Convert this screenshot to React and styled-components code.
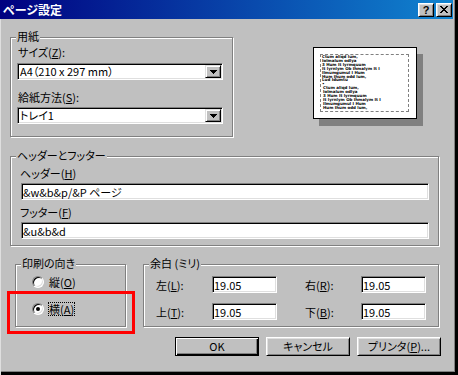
import React from 'react'
import styled, { createGlobalStyle, css } from 'styled-components'

const face = '#c0c0c0'

const GlobalStyle = createGlobalStyle`
  body {
    margin: 0;
    background: ${face};
    font-family: "MS UI Gothic", "Noto Sans CJK JP", sans-serif;
    font-size: 11px;
    font-feature-settings: "palt";
    color: #000;
  }
`

const raised = css`
  background: ${face};
  border: 1px solid;
  border-color: #fff #000 #000 #fff;
  box-shadow: inset 1px 1px 0 #dfdfdf, inset -1px -1px 0 #808080;
`

const sunken = css`
  background: #fff;
  border: 1px solid;
  border-color: #808080 #fff #fff #808080;
  box-shadow: inset 1px 1px 0 #000, inset -1px -1px 0 #dfdfdf;
`

const Window = styled.div`
  position: relative;
  width: 458px;
  height: 375px;
  box-sizing: border-box;
  padding-right: 5px;
  background: ${face};
  box-shadow: inset -3px -3px 0 #000, inset -4px -4px 0 #808080;
  display: flex;
  flex-direction: column;
  overflow: hidden;
`

const TitleBar = styled.div`
  height: 19px;
  display: flex;
  align-items: center;
  padding: 0 1px 0 3px;
  background: linear-gradient(to right, #000080, #1084d0);
  color: #fff;
  font-size: 12px;
  font-weight: bold;
`

const Title = styled.span`
  flex: 1;
  line-height: 14px;
`

const CaptionButton = styled.button`
  ${raised};
  box-sizing: border-box;
  width: 16px;
  height: 14px;
  padding: 0;
  margin-left: ${p => p.$gap || 0}px;
  display: flex;
  align-items: center;
  justify-content: center;
  font: bold 11px "Liberation Sans", sans-serif;
  color: #000;
`

const Body = styled.div`
  flex: 1;
  padding: 18px 0 0 10px;
  box-shadow: inset 1px 0 0 #dfdfdf;
  display: flex;
  flex-direction: column;
`

const TopRow = styled.div`
  display: flex;
  align-items: flex-start;
`

const Group = styled.div`
  position: relative;
  box-sizing: border-box;
  width: ${p => p.$w}px;
  height: ${p => (p.$h ? `${p.$h}px` : 'auto')};
  margin: ${p => p.$m || 0};
  padding: ${p => p.$pad || 0};
  border: 1px solid #808080;
  box-shadow: inset 1px 1px 0 #fff, 1px 1px 0 #fff;
  display: flex;
  flex-direction: column;
  align-items: flex-start;
`

const Legend = styled.span`
  position: absolute;
  top: -8px;
  left: 5px;
  padding: 0 1px;
  line-height: 13px;
  background: ${face};
`

const Label = styled.div`
  line-height: 14px;
  margin: ${p => p.$mt || 0}px 0 0 ${p => p.$ml || 0}px;
  white-space: nowrap;

  u {
    text-underline-offset: 1px;
  }
`

const Combo = styled.div`
  ${sunken};
  box-sizing: border-box;
  width: 206px;
  height: 17px;
  margin: ${p => p.$mt}px 0 0 6px;
  padding: 1px 1px 1px 2px;
  display: flex;
  align-items: center;
  line-height: 13px;
`

const ComboText = styled.span`
  flex: 1;
  white-space: nowrap;
`

const DropButton = styled.span`
  ${raised};
  box-sizing: border-box;
  width: 16px;
  height: 13px;
  border-color: #dfdfdf #000 #000 #dfdfdf;
  box-shadow: inset 1px 1px 0 #fff, inset -1px -1px 0 #808080;
  display: flex;
  align-items: center;
  justify-content: center;
`

const TextBox = styled.input`
  ${sunken};
  box-sizing: border-box;
  width: ${p => (p.$w ? `${p.$w}px` : '100%')};
  height: 17px;
  margin: ${p => p.$mt || 0}px 0 0 0;
  padding: 0 1px;
  font: inherit;
  line-height: 15px;
  color: #000;
  outline: none;
`

const PaperSheet = styled.div`
  box-sizing: border-box;
  width: 104px;
  height: 72px;
  margin: 10px 0 0 80px;
  padding: 6px 7px 6px 6px;
  background: #fff;
  border: 1px solid #000;
  box-shadow: 6px 7px 0 #808080;
`

const MarginBox = styled.div`
  box-sizing: border-box;
  height: 100%;
  border: 1px dashed #808080;
  padding: 0 1px;
  overflow: hidden;
  font: bold 4px/3.9px "DejaVu Sans", sans-serif;
  color: #000;
  white-space: nowrap;
`

const PreviewLine = styled.div`
  padding-left: ${p => (p.$indent ? 1 : 0)}px;
`

const BottomRow = styled.div`
  display: flex;
  align-items: flex-start;
  gap: 17px;
  margin: 18px 0 0 5px;
`

const RadioRow = styled.div`
  display: flex;
  align-items: center;
  height: 14px;
  margin: ${p => p.$mt}px 0 0 16px;
`

const RadioCircle = styled.span`
  position: relative;
  box-sizing: border-box;
  width: 12px;
  height: 12px;
  margin-right: 4px;
  border-radius: 50%;
  ${sunken};

  ${p => p.$checked && css`
    &::after {
      content: '';
      position: absolute;
      left: 3px;
      top: 3px;
      width: 4px;
      height: 4px;
      border-radius: 50%;
      background: #000;
    }
  `}
`

const RadioText = styled.span`
  line-height: 14px;
  padding: 0 1px;
  outline: ${p => (p.$focus ? '1px dotted #000' : 'none')};
  outline-offset: -1px;

  u {
    text-underline-offset: 1px;
  }
`

const MarginGrid = styled.div`
  display: grid;
  grid-template-columns: 56px 93px 56px 65px;
  row-gap: 10px;
  align-items: center;
  padding: 11px 0 0 12px;
`

const ButtonRow = styled.div`
  display: flex;
  justify-content: flex-end;
  gap: 7px;
  margin-top: 10px;
  padding-right: 12px;
`

const Button = styled.button`
  ${raised};
  box-sizing: border-box;
  width: 84px;
  height: 19px;
  padding: 0;
  font: inherit;
  line-height: 15px;
  color: #000;

  ${p => p.$default && css`
    border-color: #000;
    box-shadow: inset 1px 1px 0 #fff, inset -1px -1px 0 #000, inset -2px -2px 0 #808080;
  `}

  u {
    text-underline-offset: 1px;
  }
`

const Highlight = styled.div`
  position: absolute;
  left: 7px;
  top: 291px;
  width: 128px;
  height: 43px;
  box-sizing: border-box;
  border: 3px solid #ff0000;
  pointer-events: none;
`

const DownArrow = () => (
  <svg width="7" height="4" viewBox="0 0 7 4" shapeRendering="crispEdges">
    <rect x="0" y="0" width="7" height="1" fill="#000" />
    <rect x="1" y="1" width="5" height="1" fill="#000" />
    <rect x="2" y="2" width="3" height="1" fill="#000" />
    <rect x="3" y="3" width="1" height="1" fill="#000" />
  </svg>
)

const CloseGlyph = () => (
  <svg width="8" height="7" viewBox="0 0 8 7" shapeRendering="crispEdges">
    <path d="M0 0h2v1H0zM6 0h2v1H6zM1 1h2v1H1zM5 1h2v1H5zM2 2h4v1H2zM3 3h2v1H3zM2 4h4v1H2zM1 5h2v1H1zM5 5h2v1H5zM0 6h2v1H0zM6 6h2v1H6z" fill="#000" />
  </svg>
)

const paragraph = [
  'Ctum aliqd lum,',
  'Iolmalum odlya',
  '3 Hum It lyrmquum',
  'It lyrnlym Ob Ihmalym It I',
  'Ilmumgumul I Hum',
  'Hum Ihum odd lum,',
]

const previewLines = [
  ...paragraph.map(text => ({ text })),
  { text: 'Lud Idumtu' },
  { text: '•' },
  ...paragraph.map(text => ({ text, indent: true })),
]

const Mn = ({ c }) => <>(<u>{c}</u>)</>

export default function App() {
  return (
    <>
      <GlobalStyle />
      <Window>
        <TitleBar>
          <Title>ページ設定</Title>
          <CaptionButton $gap={0}>?</CaptionButton>
          <CaptionButton $gap={2}><CloseGlyph /></CaptionButton>
        </TitleBar>

        <Body>
          <TopRow>
            <Group $w={223} $h={100} $pad="7px 0 0 0">
              <Legend>用紙</Legend>
              <Label $ml={7}>サイズ<Mn c="Z" />:</Label>
              <Combo $mt={4}>
                <ComboText>A4（210 x 297 mm）</ComboText>
                <DropButton><DownArrow /></DropButton>
              </Combo>
              <Label $ml={7} $mt={10}>給紙方法<Mn c="S" />:</Label>
              <Combo $mt={3}>
                <ComboText>トレイ1</ComboText>
                <DropButton><DownArrow /></DropButton>
              </Combo>
            </Group>

            <PaperSheet>
              <MarginBox>
                {previewLines.map((line, i) => (
                  <PreviewLine key={i} $indent={line.indent}>{line.text}</PreviewLine>
                ))}
              </MarginBox>
            </PaperSheet>
          </TopRow>

          <Group $w={429} $m="19px 0 0 0" $pad="9px 9px 6px 10px">
            <Legend>ヘッダーとフッター</Legend>
            <Label $ml={-1}>ヘッダー<Mn c="H" /></Label>
            <TextBox $mt={3} readOnly defaultValue="&w&b&p/&P ページ" />
            <Label $ml={-1} $mt={5}>フッター<Mn c="F" /></Label>
            <TextBox $mt={3} readOnly defaultValue="&u&b&d" />
          </Group>

          <BottomRow>
            <Group $w={111} $h={63} $pad="10px 0 0 0">
              <Legend>印刷の向き</Legend>
              <RadioRow $mt={0}>
                <RadioCircle />
                <RadioText>縦<Mn c="O" /></RadioText>
              </RadioRow>
              <RadioRow $mt={13}>
                <RadioCircle $checked />
                <RadioText $focus>横<Mn c="A" /></RadioText>
              </RadioRow>
            </Group>

            <Group $w={296} $h={63}>
              <Legend>余白 (ミリ)</Legend>
              <MarginGrid>
                <Label>左<Mn c="L" />:</Label>
                <TextBox $w={65} readOnly defaultValue="19.05" />
                <Label>右<Mn c="R" />:</Label>
                <TextBox $w={65} readOnly defaultValue="19.05" />
                <Label>上<Mn c="T" />:</Label>
                <TextBox $w={65} readOnly defaultValue="19.05" />
                <Label>下<Mn c="B" />:</Label>
                <TextBox $w={65} readOnly defaultValue="19.05" />
              </MarginGrid>
            </Group>
          </BottomRow>

          <ButtonRow>
            <Button $default>OK</Button>
            <Button>キャンセル</Button>
            <Button>プリンタ<Mn c="P" />...</Button>
          </ButtonRow>
        </Body>

        <Highlight />
      </Window>
    </>
  )
}
